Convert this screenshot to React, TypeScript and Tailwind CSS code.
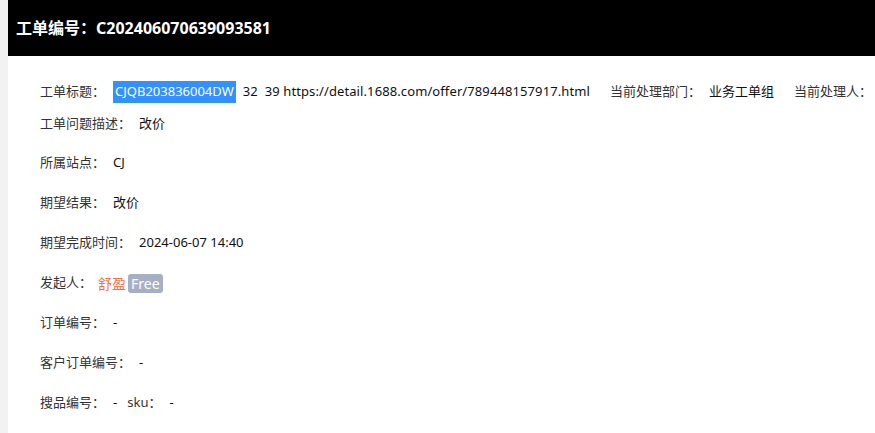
const font = { fontFamily: '"Noto Sans", "Noto Sans CJK SC", sans-serif' };

function Field({ label, children, className = "" }: { label: string; children: React.ReactNode; className?: string }) {
  return (
    <span className={`inline-flex items-center whitespace-nowrap ${className}`}>
      <span className="text-[#333]">{label}：</span>
      <span className="ml-[8px] text-[#111]">{children}</span>
    </span>
  );
}

export default function App() {
  return (
    <div className="flex h-[433px] w-[875px] overflow-hidden bg-[#f2f2f2]" style={font}>
      <div className="ml-[8px] flex flex-1 flex-col bg-white">
        {/* Header */}
        <div className="flex h-[56px] shrink-0 items-center bg-black pl-[8px]">
          <h1 className="text-[16px] font-bold text-white">工单编号：C202406070639093581</h1>
        </div>

        {/* Body */}
        <div className="flex flex-col pl-[32px] pt-[20px] text-[13px]">
          <div className="flex h-[32px] items-center whitespace-nowrap">
            <span className="text-[#333]">工单标题：</span>
            <span className="ml-[8px] flex h-[22px] items-center bg-[#3390ff] px-[2px] text-white">CJQB203836004DW</span>
            <span className="whitespace-pre tracking-[0.1px] text-[#111]">  32  39 https://detail.1688.com/offer/789448157917.html</span>
            <span className="ml-[20px] text-[#333]">当前处理部门：</span>
            <span className="ml-[8px] text-[#111]">业务工单组</span>
            <span className="ml-[20px] text-[#333]">当前处理人：</span>
          </div>
          <div className="flex h-[31px] items-center">
            <Field label="工单问题描述">改价</Field>
          </div>
          <div className="mt-[4px] flex h-[40px] items-center">
            <Field label="所属站点">CJ</Field>
          </div>
          <div className="flex h-[40px] items-center">
            <Field label="期望结果">改价</Field>
          </div>
          <div className="flex h-[40px] items-center">
            <Field label="期望完成时间">2024-06-07 14:40</Field>
          </div>
          <div className="flex h-[40px] items-center">
            <span className="text-[#333]">发起人：</span>
            <span className="ml-[6px] text-[14px] text-[#ef7149]">舒盈</span>
            <span className="ml-[2px] rounded-[3px] bg-[#a7b0c3] px-[3px] text-[14px] leading-[19px] text-white">Free</span>
          </div>
          <div className="flex h-[40px] items-center">
            <Field label="订单编号">-</Field>
          </div>
          <div className="flex h-[40px] items-center">
            <Field label="客户订单编号">-</Field>
          </div>
          <div className="flex h-[40px] items-center">
            <Field label="搜品编号">-</Field>
            <Field label="sku" className="ml-[10px]">-</Field>
          </div>
        </div>
      </div>
    </div>
  );
}
